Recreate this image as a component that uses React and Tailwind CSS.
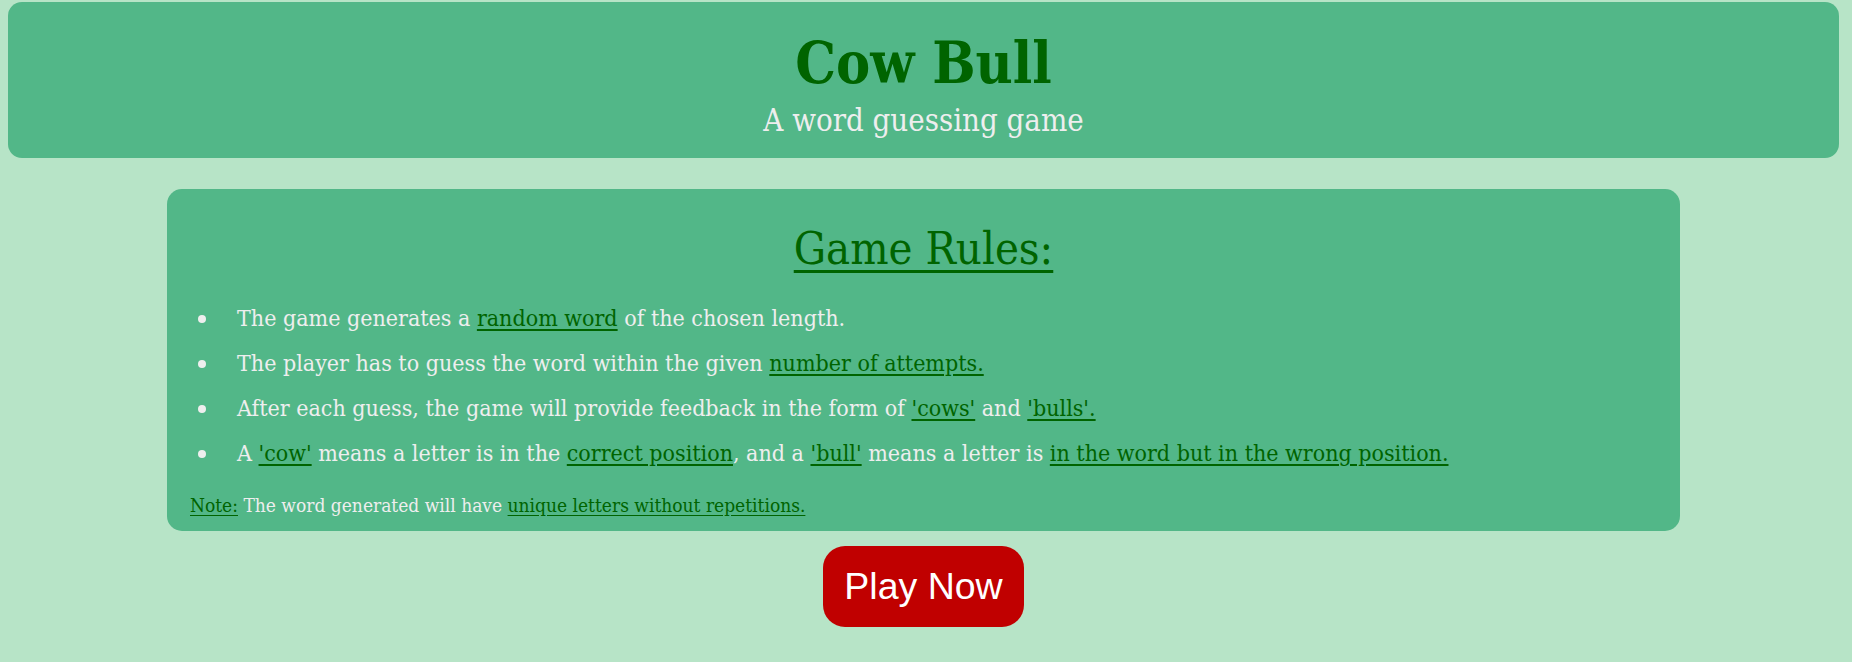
import React from 'react';

const slab = { fontFamily: '"Roboto Slab", "DejaVu Serif", serif' };

const Hl = ({ children }) => (
  <span className="text-[#006400] underline decoration-[2px] underline-offset-[3px]">{children}</span>
);

const Rule = ({ children }) => (
  <li className="flex items-center">
    <span className="ml-[8px] mr-[31px] h-[8px] w-[8px] shrink-0 rounded-full bg-[#eeeeee]" />
    <span>{children}</span>
  </li>
);

const App = () => {
  return (
    <div className="min-h-screen bg-[#b7e4c7] pr-[5px] pt-[2px] font-stretch-condensed" style={slab}>
      <header className="mx-2 flex h-[156px] flex-col items-center rounded-[14px] bg-[#52b788]">
        <h1 className="mt-[26px] text-[57px] font-bold leading-[70px] text-[#006400]">Cow Bull</h1>
        <p className="mt-[4px] text-[30.9px] leading-[36px] text-[#eeeeee]">A word guessing game</p>
      </header>

      <section className="mx-auto mt-[31px] w-[1513px] rounded-[15px] bg-[#52b788] px-[23px] pb-[14px] pt-[36px]">
        <h2 className="text-center text-[45px] font-light leading-[48px] text-[#006400] underline decoration-[3px] underline-offset-[6px]">
          Game Rules:
        </h2>
        <ul className="mt-[23px] text-[23px] leading-[45px] text-[#eeeeee]">
          <Rule>The game generates a <Hl>random word</Hl> of the chosen length.</Rule>
          <Rule>The player has to guess the word within the given <Hl>number of attempts.</Hl></Rule>
          <Rule>
            After each guess, the game will provide feedback in the form of <Hl>'cows'</Hl> and <Hl>'bulls'.</Hl>
          </Rule>
          <Rule>
            A <Hl>'cow'</Hl> means a letter is in the <Hl>correct position</Hl>, and a <Hl>'bull'</Hl> means a letter is{' '}
            <Hl>in the word but in the wrong position.</Hl>
          </Rule>
        </ul>
        <p className="mt-[17px] text-[19px] leading-[24px] text-[#eeeeee]">
          <span className="text-[#006400] underline underline-offset-[3px]">Note:</span> The word generated will have{' '}
          <span className="text-[#006400] underline underline-offset-[3px]">unique letters without repetitions.</span>
        </p>
      </section>

      <div className="mt-[15px] flex justify-center">
        <button
          className="h-[81px] w-[201px] rounded-[22px] bg-[#c00000] text-[37.5px] text-white"
          style={{ fontFamily: '"Liberation Sans", Arial, sans-serif' }}
        >
          Play Now
        </button>
      </div>
    </div>
  );
};

export default App;
